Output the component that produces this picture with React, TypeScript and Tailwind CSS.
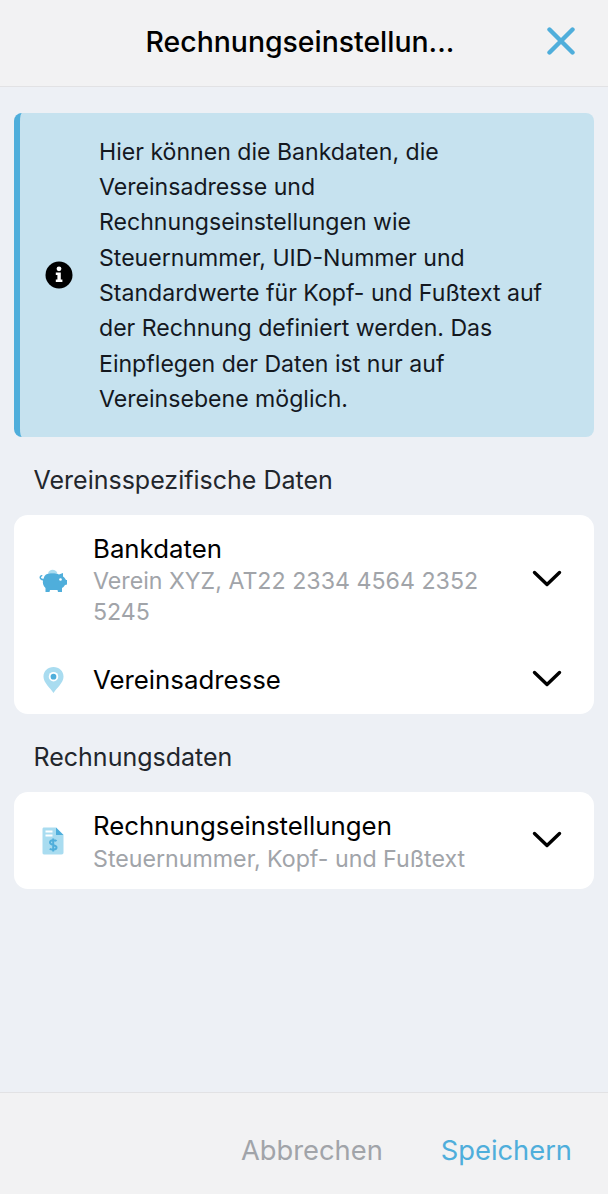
import { useState } from "react";

const font = "font-['Inter','Liberation_Sans',sans-serif]";

const Chevron = () => (
  <svg width="30" height="18" viewBox="0 0 30 18" fill="none" className="shrink-0">
    <path d="M2.5 2.5 L15 14.5 L27.5 2.5" stroke="#000" strokeWidth="3.4" strokeLinecap="round" strokeLinejoin="round" />
  </svg>
);

const PiggyIcon = () => (
  <svg width="28" height="26" viewBox="0 0 28 26" className="mr-[2px]">
    <path d="M9 6.5 C10 1.5 17 1.5 18.5 6.5 Z" fill="#a9dcf0" />
    <path d="M7 7.5 C10 5.8 17 5.8 20 7.5 L24 6 L24 9.5 C25.5 10.5 26.5 12 27 13 L28 13 L28 17.5 L26 18 C25 19.5 24 20.5 23 21 L23 25 L19 25 L18.5 23 L11 23 L10.5 25 L6.5 25 L6.5 21 C4 19 3.5 15.5 4 13.5 C2 13.5 0.5 12 0.5 10.5 C0.5 8.8 2 7.5 3.5 8 L3 9.5 C2.3 9.5 2 10 2 10.5 C2 11.5 3.5 12 4.7 11.5 C5 9.5 6 8.3 7 7.5 Z" fill="#4faedb" />
    <circle cx="21.5" cy="12.5" r="1.3" fill="#fff" />
  </svg>
);

const PinIcon = () => (
  <svg width="21" height="28" viewBox="0 0 22 28" className="mr-[1px]">
    <path d="M11 27.5 C8 22.5 0.5 17 0.5 10.5 C0.5 4.7 5.2 0.5 11 0.5 C16.8 0.5 21.5 4.7 21.5 10.5 C21.5 17 14 22.5 11 27.5 Z" fill="#a9dcf0" />
    <circle cx="11" cy="10.5" r="5" fill="#fff" />
    <circle cx="11" cy="10.5" r="3" fill="#4faedb" />
  </svg>
);

const InvoiceIcon = () => (
  <svg width="22" height="28" viewBox="0 0 22 28" className="mr-[1px]">
    <path d="M2 0.5 L14 0.5 L21.5 8 L21.5 25.5 C21.5 26.8 20.8 27.5 19.5 27.5 L2 27.5 C0.9 27.5 0.5 26.8 0.5 25.5 L0.5 2 C0.5 1 1 0.5 2 0.5 Z" fill="#a9dcf0" />
    <path d="M14 0.5 L21.5 8 L14 8 Z" fill="#4faedb" />
    <rect x="3.5" y="3.5" width="7" height="2" fill="#fff" />
    <rect x="3.5" y="7.5" width="7" height="2" fill="#fff" />
    <path d="M14.5 14.2 C13.5 13 8 12.6 8 15.5 C8 18.7 14.5 17.3 14.5 20.5 C14.5 23.2 9 23 7.8 21.6 M11.2 11.5 L11.2 24.5" stroke="#4faedb" strokeWidth="2" fill="none" />
  </svg>
);

type RowProps = {
  icon: React.ReactNode;
  title: string;
  sub?: string;
  className: string;
  textClass?: string;
  subClass?: string;
};

function Row({ icon, title, sub, className, textClass, subClass }: RowProps) {
  const [open, setOpen] = useState(false);
  return (
    <button onClick={() => setOpen(!open)} className={`flex w-full items-center text-left ${className}`}>
      <div className="flex w-[79px] shrink-0 justify-center">{icon}</div>
      <div className={`min-w-0 flex-1 ${textClass}`}>
        <div className="text-[25.8px] leading-[30px] text-black">{title}</div>
        {sub && <div className={`text-[23.2px] leading-[31.5px] text-[#a1a4a9] ${subClass}`}>{sub}</div>}
      </div>
      <div className="mr-[32px] mb-[1px] ml-[15px]">
        <Chevron />
      </div>
    </button>
  );
}

export default function App() {
  return (
    <div className={`flex h-[1194px] w-[608px] flex-col bg-[#edf0f5] ${font}`}>
      <header className="relative flex h-[87px] shrink-0 items-center justify-center border-b border-[#e2e2e4] bg-[#f2f2f3] pr-[8px]">
        <h1 className="mb-[1px] text-[28.4px] font-medium text-black">Rechnungseinstellun...</h1>
        <svg width="28" height="28" viewBox="0 0 28 28" className="absolute top-[27px] left-[547px]">
          <path d="M2.5 2.5 L25.5 25.5 M25.5 2.5 L2.5 25.5" stroke="#4faedb" strokeWidth="4.4" strokeLinecap="round" />
        </svg>
      </header>

      <main className="flex-1 px-[14px] pt-[26px]">
        <div className="flex h-[324px] items-center rounded-[8px] border-l-[6px] border-[#4faedb] bg-[#c6e2ef]">
          <div className="flex w-[79px] shrink-0 justify-center">
            <svg width="28" height="28" viewBox="0 0 28 28" className="mr-[1px]">
              <circle cx="14" cy="14" r="13.5" fill="#000" />
              <circle cx="14" cy="7.8" r="2.4" fill="#fff" />
              <path d="M10.8 11.6 L15.8 11.6 L15.8 18.6 L17.4 18.6 L17.4 21 L10.8 21 L10.8 18.6 L12.4 18.6 L12.4 14 L10.8 14 Z" fill="#fff" />
            </svg>
          </div>
          <p className="w-[470px] pt-[2px] text-[23.1px] leading-[35.3px] text-[#14181f]">
            Hier können die Bankdaten, die Vereinsadresse und Rechnungseinstellungen wie Steuernummer, UID-Nummer und Standardwerte für Kopf- und Fußtext auf der Rechnung definiert werden. Das Einpflegen der Daten ist nur auf Vereinsebene möglich.
          </p>
        </div>

        <h2 className="mt-[26px] mb-[18px] pl-[19.5px] text-[25px] leading-[34px] text-[#22262c]">Vereinsspezifische Daten</h2>
        <section className="rounded-[14px] bg-white">
          <Row icon={<PiggyIcon />} title="Bankdaten" sub="Verein XYZ, AT22 2334 4564 2352 5245" className="h-[129px]" textClass="pt-[3px]" subClass="mt-[2px]" />
          <Row icon={<PinIcon />} title="Vereinsadresse" className="h-[70px] pt-[1px]" />
        </section>

        <h2 className="mt-[26px] mb-[18px] pl-[19.5px] text-[25px] leading-[34px] text-[#22262c]">Rechnungsdaten</h2>
        <section className="rounded-[14px] bg-white">
          <Row icon={<InvoiceIcon />} title="Rechnungseinstellungen" sub="Steuernummer, Kopf- und Fußtext" className="h-[97px]" textClass="pt-[6px]" subClass="mt-[3px]" />
        </section>
      </main>

      <footer className="flex h-[102px] shrink-0 items-start justify-end gap-[58px] border-t border-[#e2e2e4] bg-[#f2f2f3] pt-[41px] pr-[36px] text-[27.3px] leading-[34px]">
        <button className="text-[#a1a4a9]">Abbrechen</button>
        <button className="text-[#4faedb]">Speichern</button>
      </footer>
    </div>
  );
}
